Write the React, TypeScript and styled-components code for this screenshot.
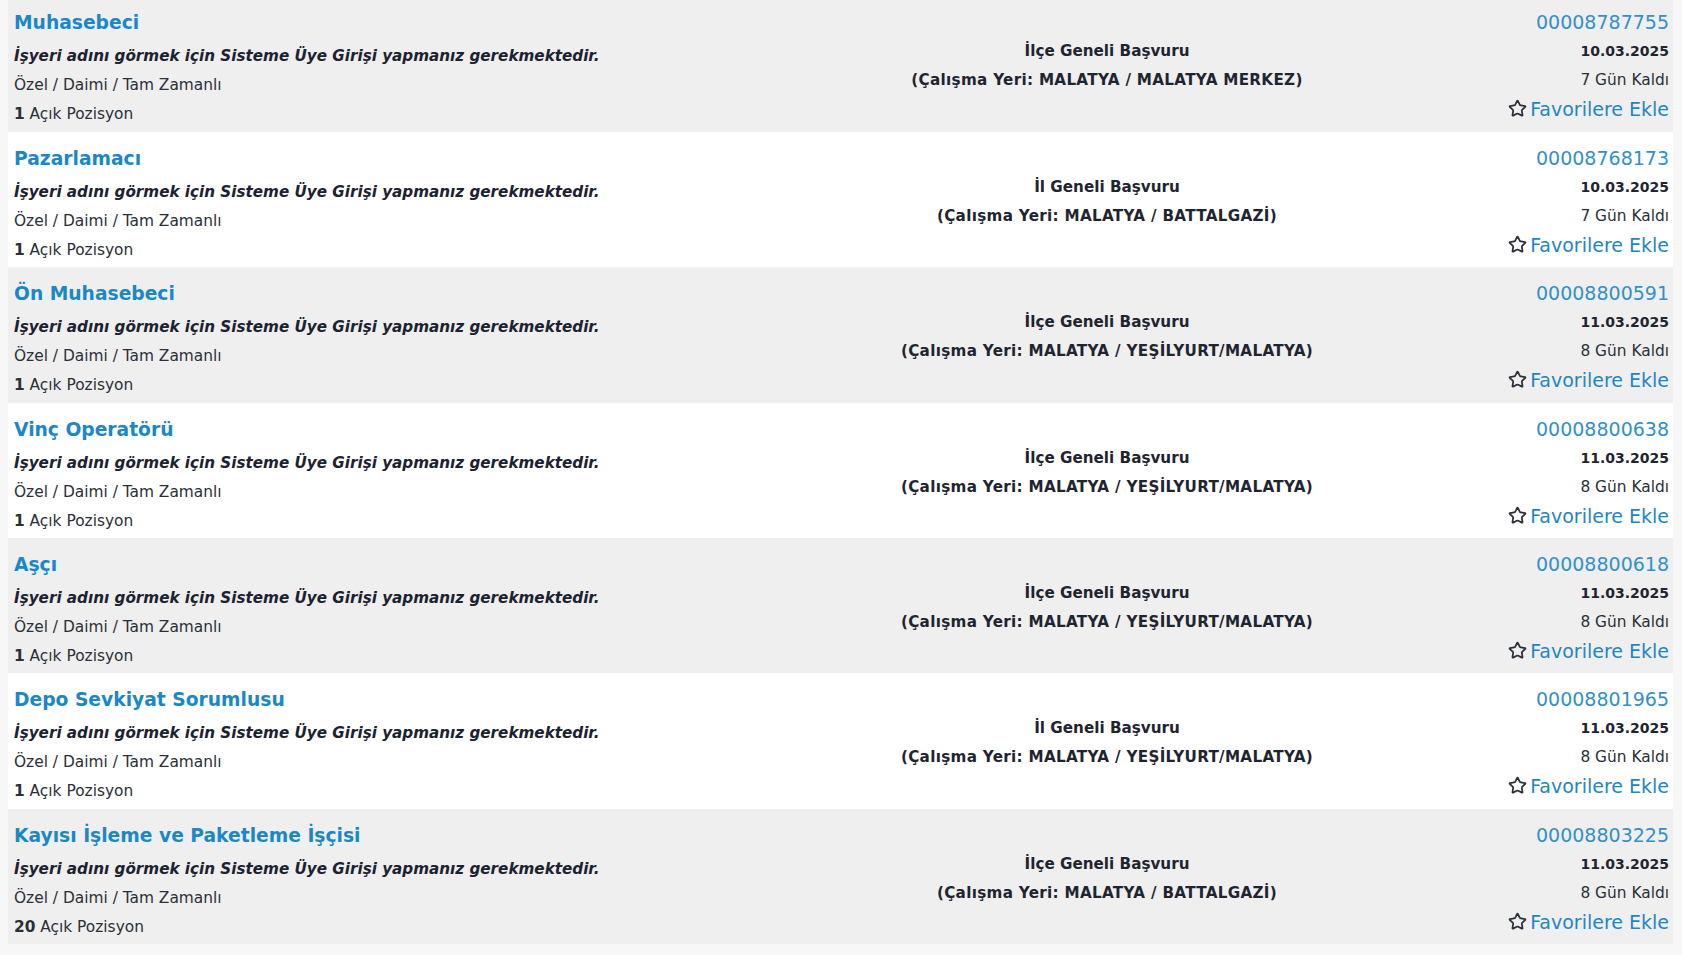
import React from 'react';
import styled, { createGlobalStyle } from 'styled-components';
import { Star } from 'lucide-react';

type Job = {
    title: string;
    scope: string;
    place: string;
    no: string;
    date: string;
    left: string;
    count: number;
};

const jobs: Job[] = [
    { title: 'Muhasebeci', scope: 'İlçe Geneli Başvuru', place: 'MALATYA / MALATYA MERKEZ', no: '00008787755', date: '10.03.2025', left: '7 Gün Kaldı', count: 1 },
    { title: 'Pazarlamacı', scope: 'İl Geneli Başvuru', place: 'MALATYA / BATTALGAZİ', no: '00008768173', date: '10.03.2025', left: '7 Gün Kaldı', count: 1 },
    { title: 'Ön Muhasebeci', scope: 'İlçe Geneli Başvuru', place: 'MALATYA / YEŞİLYURT/MALATYA', no: '00008800591', date: '11.03.2025', left: '8 Gün Kaldı', count: 1 },
    { title: 'Vinç Operatörü', scope: 'İlçe Geneli Başvuru', place: 'MALATYA / YEŞİLYURT/MALATYA', no: '00008800638', date: '11.03.2025', left: '8 Gün Kaldı', count: 1 },
    { title: 'Aşçı', scope: 'İlçe Geneli Başvuru', place: 'MALATYA / YEŞİLYURT/MALATYA', no: '00008800618', date: '11.03.2025', left: '8 Gün Kaldı', count: 1 },
    { title: 'Depo Sevkiyat Sorumlusu', scope: 'İl Geneli Başvuru', place: 'MALATYA / YEŞİLYURT/MALATYA', no: '00008801965', date: '11.03.2025', left: '8 Gün Kaldı', count: 1 },
    { title: 'Kayısı İşleme ve Paketleme İşçisi', scope: 'İlçe Geneli Başvuru', place: 'MALATYA / BATTALGAZİ', no: '00008803225', date: '11.03.2025', left: '8 Gün Kaldı', count: 20 },
];

const App = () => {
    return (
        <Page>
            <GlobalStyle />
            <List>
                {jobs.map((job, i) => (
                    <Row key={job.no} $odd={i % 2 === 0}>
                        <InfoCol>
                            <Title href="#">{job.title}</Title>
                            <Notice>İşyeri adını görmek için Sisteme Üye Girişi yapmanız gerekmektedir.</Notice>
                            <Line>Özel / Daimi / Tam Zamanlı</Line>
                            <Line>
                                <b>{job.count}</b> Açık Pozisyon
                            </Line>
                        </InfoCol>
                        <PlaceCol>
                            <PlaceLine>{job.scope}</PlaceLine>
                            <PlaceLine $wide>(Çalışma Yeri: {job.place})</PlaceLine>
                        </PlaceCol>
                        <MetaCol>
                            <JobNo href="#">{job.no}</JobNo>
                            <DateText>{job.date}</DateText>
                            <Line>{job.left}</Line>
                            <FavLink href="#">
                                <Star size={19} strokeWidth={2.2} />
                                <span>Favorilere Ekle</span>
                            </FavLink>
                        </MetaCol>
                    </Row>
                ))}
            </List>
        </Page>
    );
};
export default App;

const GlobalStyle = createGlobalStyle`
    html, body {
        margin: 0;
        padding: 0;
        background: #f7f7f7;
        font-family: "DejaVu Sans", Verdana, sans-serif;
        overflow: hidden;
    }
`;

const Page = styled.div`
    min-height: 955px;
    padding: 0 9px 0 8px;
`;

const List = styled.div`
    margin-top: -3.7px;
    display: flex;
    flex-direction: column;
`;

const Row = styled.div<{ $odd: boolean }>`
    display: grid;
    grid-template-columns: 795px 596px 1fr;
    height: 135.43px;
    flex-shrink: 0;
    box-sizing: border-box;
    padding: 12px 4px 0 6px;
    background: ${(p) => (p.$odd ? '#efefef' : '#ffffff')};
    color: #1f2530;
`;

const InfoCol = styled.div`
    display: flex;
    flex-direction: column;
    align-items: flex-start;
`;

const Title = styled.a`
    font-weight: bold;
    font-size: 18.7px;
    line-height: 29px;
    margin-bottom: 5px;
    color: #1a88c8;
    text-decoration: none;
`;

const Notice = styled.div`
    font-style: italic;
    font-weight: bold;
    font-size: 15.2px;
    line-height: 29px;
    color: #1c2230;
`;

const Line = styled.div`
    font-size: 15.4px;
    line-height: 29px;
    color: #2a2f38;
`;

const PlaceCol = styled.div`
    display: flex;
    flex-direction: column;
    align-items: center;
    padding-top: 29px;
`;

const PlaceLine = styled.div<{ $wide?: boolean }>`
    font-weight: bold;
    font-size: 15.2px;
    line-height: 29px;
    letter-spacing: ${(p) => (p.$wide ? '0.3px' : '0')};
    color: #1f2530;
`;

const MetaCol = styled.div`
    display: flex;
    flex-direction: column;
    align-items: flex-end;
`;

const JobNo = styled.a`
    font-size: 19px;
    line-height: 29px;
    color: #3390ca;
    text-decoration: none;
`;

const DateText = styled.div`
    font-weight: bold;
    font-size: 14px;
    line-height: 29px;
    color: #1f2530;
`;

const FavLink = styled.a`
    display: flex;
    align-items: center;
    gap: 3px;
    font-size: 19px;
    line-height: 29px;
    color: #1f86c4;
    text-decoration: none;
    svg {
        color: #2a2f38;
        margin-top: -2px;
    }
`;
